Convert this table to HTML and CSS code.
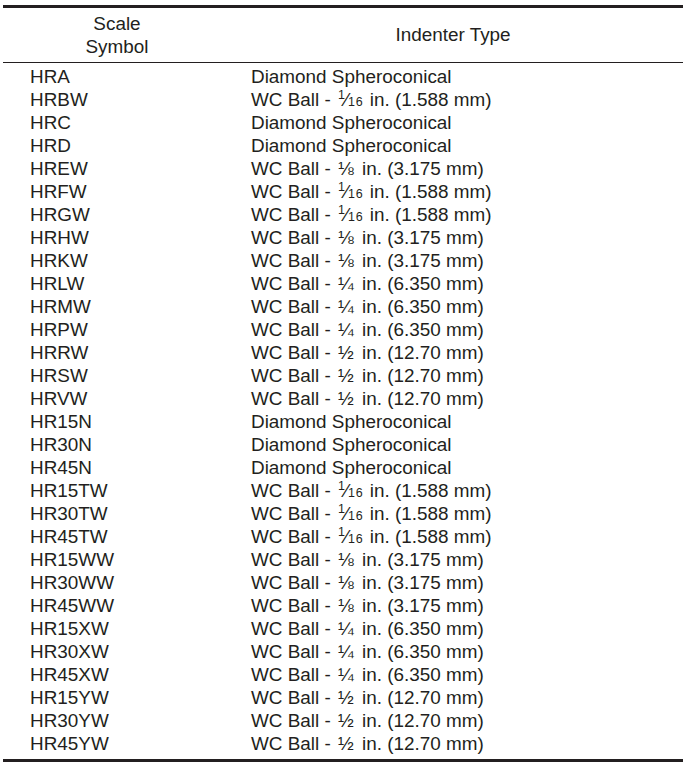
FILE: index.html
```html
<!DOCTYPE html>
<html>
<head>
<meta charset="utf-8">
<link rel="stylesheet" href="styles.css">
</head>
<body>
<div class="table">
  <div class="head">
    <div class="h1">Scale<br>Symbol</div>
    <div class="h2">Indenter Type</div>
  </div>
  <div class="body">
    <div class="row"><span class="c1">HRA</span><span class="c2">Diamond Spheroconical</span></div>
    <div class="row"><span class="c1">HRBW</span><span class="c2">WC Ball - <span class="frac"><sup>1</sup><span class="sl">⁄</span><sub>16</sub></span> in. (1.588 mm)</span></div>
    <div class="row"><span class="c1">HRC</span><span class="c2">Diamond Spheroconical</span></div>
    <div class="row"><span class="c1">HRD</span><span class="c2">Diamond Spheroconical</span></div>
    <div class="row"><span class="c1">HREW</span><span class="c2">WC Ball - <span class="uf">⅛</span> in. (3.175 mm)</span></div>
    <div class="row"><span class="c1">HRFW</span><span class="c2">WC Ball - <span class="frac"><sup>1</sup><span class="sl">⁄</span><sub>16</sub></span> in. (1.588 mm)</span></div>
    <div class="row"><span class="c1">HRGW</span><span class="c2">WC Ball - <span class="frac"><sup>1</sup><span class="sl">⁄</span><sub>16</sub></span> in. (1.588 mm)</span></div>
    <div class="row"><span class="c1">HRHW</span><span class="c2">WC Ball - <span class="uf">⅛</span> in. (3.175 mm)</span></div>
    <div class="row"><span class="c1">HRKW</span><span class="c2">WC Ball - <span class="uf">⅛</span> in. (3.175 mm)</span></div>
    <div class="row"><span class="c1">HRLW</span><span class="c2">WC Ball - <span class="uf">¼</span> in. (6.350 mm)</span></div>
    <div class="row"><span class="c1">HRMW</span><span class="c2">WC Ball - <span class="uf">¼</span> in. (6.350 mm)</span></div>
    <div class="row"><span class="c1">HRPW</span><span class="c2">WC Ball - <span class="uf">¼</span> in. (6.350 mm)</span></div>
    <div class="row"><span class="c1">HRRW</span><span class="c2">WC Ball - <span class="uf">½</span> in. (12.70 mm)</span></div>
    <div class="row"><span class="c1">HRSW</span><span class="c2">WC Ball - <span class="uf">½</span> in. (12.70 mm)</span></div>
    <div class="row"><span class="c1">HRVW</span><span class="c2">WC Ball - <span class="uf">½</span> in. (12.70 mm)</span></div>
    <div class="row"><span class="c1">HR15N</span><span class="c2">Diamond Spheroconical</span></div>
    <div class="row"><span class="c1">HR30N</span><span class="c2">Diamond Spheroconical</span></div>
    <div class="row"><span class="c1">HR45N</span><span class="c2">Diamond Spheroconical</span></div>
    <div class="row"><span class="c1">HR15TW</span><span class="c2">WC Ball - <span class="frac"><sup>1</sup><span class="sl">⁄</span><sub>16</sub></span> in. (1.588 mm)</span></div>
    <div class="row"><span class="c1">HR30TW</span><span class="c2">WC Ball - <span class="frac"><sup>1</sup><span class="sl">⁄</span><sub>16</sub></span> in. (1.588 mm)</span></div>
    <div class="row"><span class="c1">HR45TW</span><span class="c2">WC Ball - <span class="frac"><sup>1</sup><span class="sl">⁄</span><sub>16</sub></span> in. (1.588 mm)</span></div>
    <div class="row"><span class="c1">HR15WW</span><span class="c2">WC Ball - <span class="uf">⅛</span> in. (3.175 mm)</span></div>
    <div class="row"><span class="c1">HR30WW</span><span class="c2">WC Ball - <span class="uf">⅛</span> in. (3.175 mm)</span></div>
    <div class="row"><span class="c1">HR45WW</span><span class="c2">WC Ball - <span class="uf">⅛</span> in. (3.175 mm)</span></div>
    <div class="row"><span class="c1">HR15XW</span><span class="c2">WC Ball - <span class="uf">¼</span> in. (6.350 mm)</span></div>
    <div class="row"><span class="c1">HR30XW</span><span class="c2">WC Ball - <span class="uf">¼</span> in. (6.350 mm)</span></div>
    <div class="row"><span class="c1">HR45XW</span><span class="c2">WC Ball - <span class="uf">¼</span> in. (6.350 mm)</span></div>
    <div class="row"><span class="c1">HR15YW</span><span class="c2">WC Ball - <span class="uf">½</span> in. (12.70 mm)</span></div>
    <div class="row"><span class="c1">HR30YW</span><span class="c2">WC Ball - <span class="uf">½</span> in. (12.70 mm)</span></div>
    <div class="row"><span class="c1">HR45YW</span><span class="c2">WC Ball - <span class="uf">½</span> in. (12.70 mm)</span></div>
  </div>
</div>
</body>
</html>
```

FILE: styles.css
```css
html, body {
  margin: 0;
  padding: 0;
  background: #ffffff;
}
body {
  font-family: "Liberation Sans", Arial, Helvetica, sans-serif;
  font-size: 18.9px;
  color: #231f20;
}
.table {
  margin: 5px 5px 0 3px;
  border-top: 3px solid #231f20;
  border-bottom: 3px solid #231f20;
}
.head {
  display: grid;
  grid-template-columns: 228px 1fr;
  align-items: center;
  padding: 4px 0;
  border-bottom: 1px solid #231f20;
  line-height: 23px;
}
.h1 {
  text-align: center;
}
.h2 {
  text-align: center;
  padding-right: 8px;
  position: relative;
  top: -1px;
}
.body {
  padding: 2px 0 4px;
}
.row {
  display: grid;
  grid-template-columns: 248px 1fr;
  height: 23px;
  line-height: 23px;
  white-space: nowrap;
}
.c1 {
  padding-left: 27px;
}
.uf {
  margin: 0 3px 0 2px;
}
.frac {
  margin-left: 2px;
  margin-right: 1px;
}
.frac sup, .frac sub {
  font-size: 0.66em;
  line-height: 0;
  position: relative;
  vertical-align: baseline;
}
.frac sup {
  top: -0.6em;
}
.frac sub {
  top: 0;
  letter-spacing: 0.8px;
}
.sl {
  font-size: 1em;
  margin: 0 0 0 0;
}
```
